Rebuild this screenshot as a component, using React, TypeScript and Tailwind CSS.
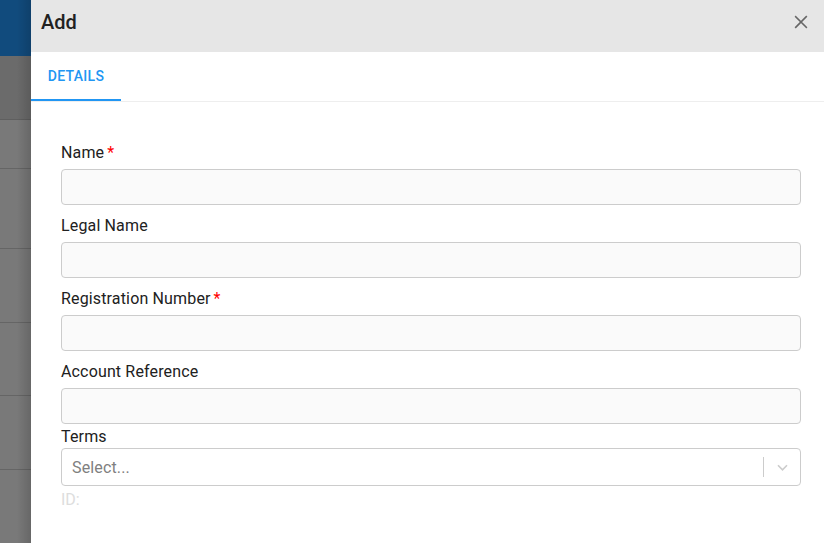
import React from "react";

function Label({ label, required }: { label: string; required?: boolean }) {
  return (
    <div className="h-[24px] pt-[1px] leading-[24px] text-[16px] tracking-[0.15px] text-[#212121]">
      {label}
      {required && <span className="ml-[3px] text-[#ff0000]">*</span>}
    </div>
  );
}

function Field({ label, required }: { label: string; required?: boolean }) {
  return (
    <div className="flex flex-col">
      <Label label={label} required={required} />
      <div className="mt-[5px] h-[36px] rounded-[4px] border border-[#cccccc] bg-[#fafafa]" />
    </div>
  );
}

export default function App() {
  return (
    <div className="flex h-[543px] w-[824px] overflow-hidden" style={{ fontFamily: "Roboto, 'Liberation Sans', sans-serif" }}>
      <div className="relative flex w-[31px] flex-col">
        <div className="h-[56px] bg-[#114b7d]" />
        <div className="h-[64px] border-b border-[#5f5f5f] bg-[#6b6b6b]" />
        <div className="h-[49px] border-b border-[#656565] bg-[#797979]" />
        <div className="h-[80px] border-b border-[#656565] bg-[#797979]" />
        <div className="h-[74px] border-b border-[#656565] bg-[#797979]" />
        <div className="h-[73px] border-b border-[#656565] bg-[#797979]" />
        <div className="h-[74px] border-b border-[#656565] bg-[#797979]" />
        <div className="flex-1 bg-[#797979]" />
        <div className="absolute inset-y-0 right-0 w-[14px] bg-gradient-to-r from-transparent to-black/15" />
      </div>
      <div className="flex flex-1 flex-col bg-white">
        <div className="flex h-[52px] items-start justify-between bg-[#e6e6e6] pl-[10px] pr-[14px] pt-[10px]">
          <span className="leading-[24px] text-[20px] font-medium text-[#212121]">Add</span>
          <svg className="mt-[3px]" width="18" height="18" viewBox="0 0 24 24" fill="none" stroke="#666666" strokeWidth="2.2" strokeLinecap="square">
            <path d="M5 5 L19 19 M19 5 L5 19" />
          </svg>
        </div>
        <div className="flex h-[50px] border-b border-[#eeeeee]">
          <div className="flex w-[90px] flex-col items-center justify-center border-b-2 border-[#2196f3] pt-[2px] text-[14px] font-medium tracking-[0.3px] text-[#2196f3]">
            DETAILS
          </div>
        </div>
        <div className="flex flex-col pl-[30px] pr-[23px] pt-[38px]">
          <Field label="Name" required />
          <div className="mt-[8px]">
            <Field label="Legal Name" />
          </div>
          <div className="mt-[8px]">
            <Field label="Registration Number" required />
          </div>
          <div className="mt-[8px]">
            <Field label="Account Reference" />
          </div>
          <Label label="Terms" />
          <div className="flex h-[38px] items-center rounded-[4px] border border-[#cccccc] bg-white">
            <span className="flex-1 pl-[10px] pt-[1px] text-[16px] tracking-[0.15px] text-[#808080]">Select...</span>
            <div className="h-[20px] w-px bg-[#cccccc]" />
            <div className="flex w-[36px] items-center justify-center pt-[1px]">
              <svg width="15" height="15" viewBox="0 0 20 20" fill="none" stroke="#cccccc" strokeWidth="2.2">
                <path d="M4 7 L10 13 L16 7" />
              </svg>
            </div>
          </div>
          <div className="mt-[1px] h-[24px] pt-[1px] leading-[24px] text-[16px] text-[#dddddd]">ID:</div>
        </div>
      </div>
    </div>
  );
}
